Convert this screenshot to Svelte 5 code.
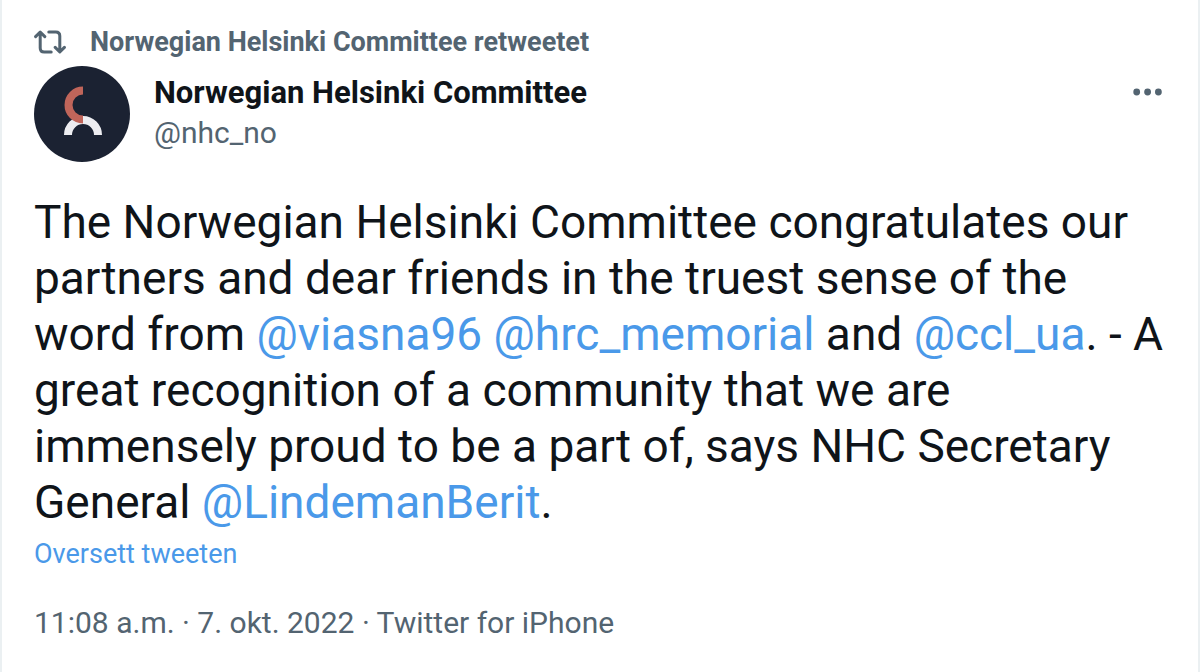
<script lang="ts">
	const author = 'Norwegian Helsinki Committee';
	const handle = 'nhc_no';
	const parts = [
		{ text: 'The Norwegian Helsinki Committee congratulates our partners and dear friends in the truest sense of the word from ' },
		{ user: 'viasna96' },
		{ text: ' ' },
		{ user: 'hrc_memorial' },
		{ text: ' and ' },
		{ user: 'ccl_ua' },
		{ text: '. - A great recognition of a community that we are immensely proud to be a part of, says NHC Secretary General ' },
		{ user: 'LindemanBerit' },
		{ text: '.' }
	];
</script>

<article class="tweet">
	<a class="context" href="#{handle}">
		<svg class="retweet" viewBox="0 0 32 24" aria-hidden="true">
			<path d="M1.6 6.6L6.2 2l4.6 4.6M6.2 2.5V18q0 4 4 4h7" />
			<path d="M30.4 17.4L25.8 22l-4.6-4.6M25.8 21.5V6q0-4-4-4h-7" />
		</svg>
		<span>{author} retweetet</span>
	</a>
	<header class="header">
		<svg class="avatar" viewBox="0 0 96 96" role="img" aria-label={author}>
			<circle cx="48" cy="48" r="48" fill="#1b2232" />
			<path d="M34 69a15 15 0 0 1 30 0" stroke="#ededf1" />
			<path d="M49 24.5a14.5 14.5 0 0 0 0 29" stroke="#c0655a" />
		</svg>
		<div class="names">
			<a class="name" href="#{handle}">{author}</a>
			<a class="handle" href="#{handle}">@{handle}</a>
		</div>
		<button class="more" aria-label="Mer">
			<svg viewBox="0 0 38 52" aria-hidden="true">
				<circle cx="8.7" cy="26" r="3.4" />
				<circle cx="19.6" cy="26" r="3.4" />
				<circle cx="30.4" cy="26" r="3.4" />
			</svg>
		</button>
	</header>
	<p class="text">
		{#each parts as part}{#if part.user}<a href="#{part.user}">@{part.user}</a>{:else}{part.text}{/if}{/each}
	</p>
	<button class="translate">Oversett tweeten</button>
	<footer class="meta">
		<a href="#status">11:08 a.m. · 7. okt. 2022</a> · <a href="#source">Twitter for iPhone</a>
	</footer>
</article>

<style>
	:global(body) {
		margin: 0;
		background: #fff;
	}
	.tweet {
		box-sizing: border-box;
		min-height: 100vh;
		margin-right: 2px;
		padding: 26px 32px 28px;
		border: solid #ebf0f2;
		border-width: 0 2px;
		color: #0f1419;
		font-family: Roboto, 'Liberation Sans', sans-serif;
	}
	a {
		color: inherit;
		text-decoration: none;
	}
	button {
		padding: 0;
		border: 0;
		background: none;
		font: inherit;
		cursor: pointer;
	}
	.context {
		display: flex;
		align-items: center;
		gap: 24px;
		color: #536471;
		font-size: 27px;
		font-weight: 700;
		line-height: 32px;
	}
	.retweet {
		width: 32px;
		height: 24px;
		fill: none;
		stroke: #536471;
		stroke-width: 3;
		stroke-linecap: round;
		stroke-linejoin: round;
	}
	.header {
		display: flex;
		align-items: flex-start;
		margin-top: 8px;
	}
	.avatar {
		width: 96px;
		height: 96px;
		fill: none;
		stroke-width: 8;
	}
	.names {
		display: flex;
		flex: 1;
		flex-direction: column;
		margin: 7px 24px 0;
		font-size: 30px;
		line-height: 40px;
	}
	.name {
		font-size: 31px;
		font-weight: 700;
	}
	.handle,
	.meta {
		color: #536471;
	}
	.more svg {
		display: block;
		width: 38px;
		height: 52px;
		fill: #536471;
	}
	.text {
		margin: 32px 0 0;
		font-size: 46px;
		line-height: 56px;
	}
	.text a,
	.translate {
		color: #4a99e9;
	}
	.translate {
		display: block;
		margin-top: 8px;
		font-size: 27px;
		line-height: 32px;
	}
	.meta {
		margin-top: 33px;
		font-size: 30px;
		line-height: 40px;
	}
</style>
